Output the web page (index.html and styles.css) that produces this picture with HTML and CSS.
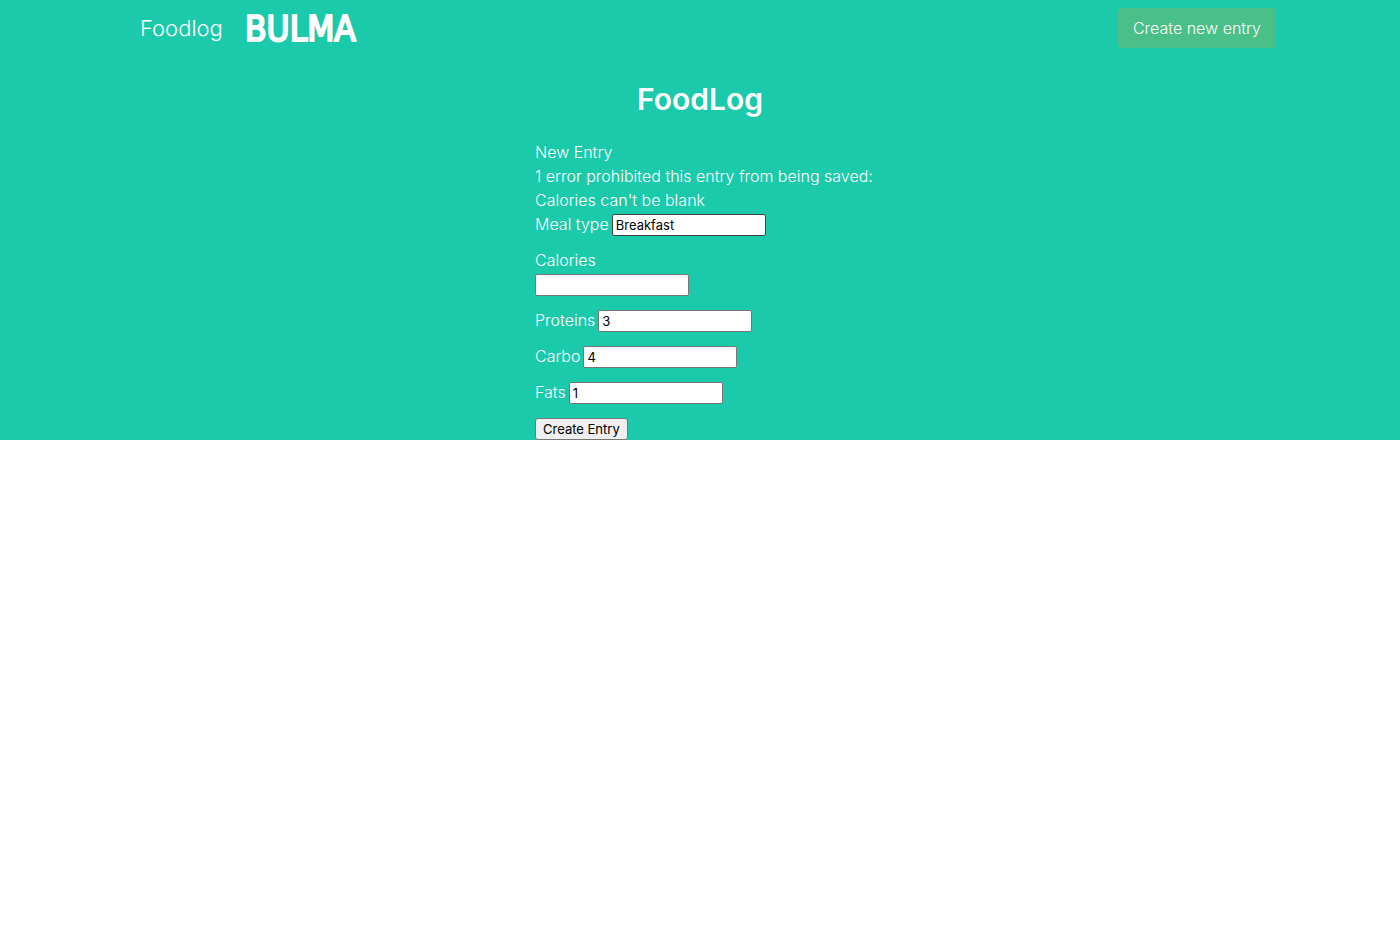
FILE: index.html
```html
<!DOCTYPE html>
<html lang="en">
<head>
<meta charset="utf-8">
<meta name="viewport" content="width=device-width, initial-scale=1">
<title>FoodLog</title>
<link rel="stylesheet" href="styles.css">
</head>
<body>
<section class="hero">
  <nav class="navbar" aria-label="main navigation">
    <div class="navbar-brand">
      <a class="brand-name" href="#">Foodlog</a>
      <a class="brand-logo" href="#">
        <svg class="logo" viewBox="0 0 112 28" role="img" aria-label="Bulma">
          <text class="logo-text" x="-2" y="27">BULMA</text>
        </svg>
      </a>
    </div>
    <a class="button" href="#">Create new entry</a>
  </nav>
  <h1 class="title">FoodLog</h1>
  <main class="content">
    <h2 class="line">New Entry</h2>
    <form class="form">
      <div class="errors">
        <h3 class="line">1 error prohibited this entry from being saved:</h3>
        <ul class="error-list"><li>Calories can't be blank</li></ul>
      </div>
      <div class="field"><label for="meal">Meal type</label> <input class="input input-active" id="meal" type="text" value="Breakfast"></div>
      <div class="field field-stacked"><label for="calories">Calories</label><input class="input" id="calories" type="text"></div>
      <div class="field"><label for="proteins">Proteins</label> <input class="input" id="proteins" type="text" value="3"></div>
      <div class="field"><label for="carbo">Carbo</label> <input class="input" id="carbo" type="text" value="4"></div>
      <div class="field"><label for="fats">Fats</label> <input class="input" id="fats" type="text" value="1"></div>
      <button class="submit" type="submit">Create Entry</button>
    </form>
  </main>
</section>
</body>
</html>
```
FILE: styles.css
```css
* { box-sizing: border-box; }
body {
  margin: 0;
  background: #fff;
  font: 300 16px/24px Inter, "Liberation Sans", sans-serif;
}
.hero { background: #1bcaab; color: #fff; }
.navbar {
  display: flex;
  align-items: center;
  justify-content: space-between;
  max-width: 1152px;
  min-height: 56px;
  margin: 0 auto;
}
.navbar-brand { display: flex; align-items: center; gap: 24px; padding-left: 16px; }
.brand-name { color: #fff; font-size: 22px; text-decoration: none; }
.brand-logo { display: flex; }
.logo { width: 112px; height: 28px; overflow: visible; }
.logo-text {
  font: 400 35px "DejaVu Sans Condensed", "DejaVu Sans", sans-serif;
  fill: #fff;
  stroke: #fff;
  stroke-width: 2px;
  stroke-linejoin: round;
}
.button {
  padding: 8px 15px;
  border-radius: 4px;
  background: #48c088;
  color: #fff;
  text-decoration: none;
}
.title {
  margin: 0;
  padding: 25px 0 23px;
  color: #fff;
  font-size: 30px;
  font-weight: 600;
  line-height: 36px;
  text-align: center;
}
.content { width: 330px; margin: 0 auto; white-space: nowrap; }
.line { margin: 0; font-size: 16px; font-weight: 300; line-height: 24px; }
.error-list { margin: 0; padding: 0; list-style: none; }
.field { display: flex; gap: 3px; height: 24px; margin-bottom: 12px; }
.field-stacked { flex-direction: column; gap: 0; height: 48px; }
.input {
  width: 154px;
  height: 22px;
  margin-top: 2px;
  padding: 1px 3px;
  border: 1px solid #767676;
  border-radius: 2px;
  background: #fff;
  color: #000;
  font: 400 13px/18px Inter, "Liberation Sans", sans-serif;
}
.input-active { border-color: #444; }
.submit {
  display: block;
  height: 22px;
  margin-top: 14px;
  padding: 1px 7px;
  border: 1px solid #767676;
  border-radius: 3px;
  background: #efefef;
  color: #000;
  font: 400 13px/18px Inter, "Liberation Sans", sans-serif;
}
```
